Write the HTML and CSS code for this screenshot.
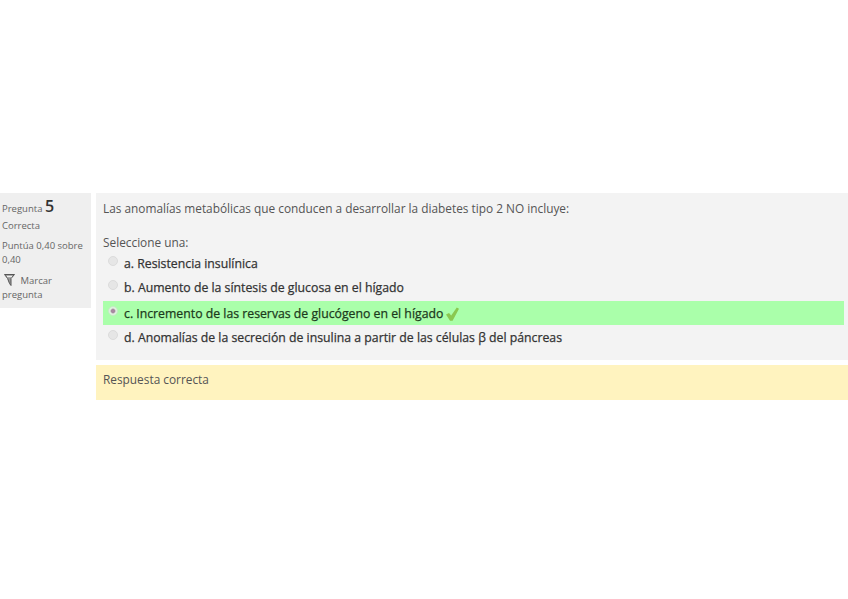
FILE: index.html
```html
<!DOCTYPE html>
<html lang="es">
<head>
<meta charset="utf-8">
<title>Pregunta 5</title>
<link rel="stylesheet" href="styles.css">
</head>
<body>
<main class="question">
  <aside class="info">
    <div class="qno">Pregunta <span class="num">5</span></div>
    <div class="state">Correcta</div>
    <div class="grade">Puntúa 0,40 sobre 0,40</div>
    <div class="flag">
      <svg class="flag-icon" width="11" height="12" viewBox="0 0 11 12"><path d="M0.5 0.5H10.5L7 4.5V11.5L5.5 9.5 3.6 4.5Z" fill="#9a9a9a" stroke="#555" stroke-width="1"/><path d="M3 2.5H8" stroke="#eee" stroke-width="1.4"/></svg>
      <span class="flag-first">Marcar</span> pregunta
    </div>
  </aside>
  <div class="content">
    <section class="formulation">
      <p class="qtext">Las anomalías metabólicas que conducen a desarrollar la diabetes tipo 2 NO incluye:</p>
      <p class="prompt">Seleccione una:</p>
      <div class="answers">
        <div class="option"><span class="radio"></span><span>a. Resistencia insulínica</span></div>
        <div class="option"><span class="radio"></span><span>b. Aumento de la síntesis de glucosa en el hígado</span></div>
        <div class="option correct"><span class="radio checked"></span><span>c. Incremento de las reservas de glucógeno en el hígado</span>
          <svg class="tick" width="13" height="14" viewBox="0 0 13 14"><path d="M0 7.6 3 6 5.2 8.4 10.8 0.6 13 1.8 6.6 13.8 4 13.8Z" fill="#8ac850"/></svg>
        </div>
        <div class="option"><span class="radio"></span><span>d. Anomalías de la secreción de insulina a partir de las células β del páncreas</span></div>
      </div>
    </section>
    <section class="feedback">Respuesta correcta</section>
  </div>
</main>
</body>
</html>
```
FILE: styles.css
```css
html, body {
  margin: 0;
  padding: 0;
  background: #fff;
}
body {
  font-family: "Open Sans", "Liberation Sans", sans-serif;
  color: #555;
  height: 599px;
  overflow: hidden;
  padding-top: 193px;
  box-sizing: border-box;
}
.question {
  display: flex;
  align-items: flex-start;
  gap: 5px;
}
.info {
  width: 91px;
  height: 115px;
  flex: none;
  box-sizing: border-box;
  background: #efefef;
  padding: 4px 0 0 2px;
  font-size: 9.5px;
  line-height: 14px;
  color: #666;
}
.qno {
  height: 18px;
  line-height: 18px;
}
.num {
  font-size: 16px;
  font-weight: 600;
  color: #333;
}
.state {
  margin-top: 4px;
}
.grade {
  margin-top: 6px;
}
.flag {
  margin-top: 7px;
}
.flag-icon {
  margin-left: 2px;
  vertical-align: -2px;
}
.flag-first {
  margin-left: 3px;
}
.content {
  flex: 1;
  min-width: 0;
  display: flex;
  flex-direction: column;
  gap: 5px;
}
.formulation {
  height: 167px;
  box-sizing: border-box;
  background: #f3f3f3;
  padding: 6px 4px 0 7px;
  font-size: 11.85px;
}
.qtext {
  margin: 0;
  line-height: 18px;
}
.prompt {
  margin: 16px 0 0;
  line-height: 18px;
}
.answers {
  display: flex;
  flex-direction: column;
}
.option {
  display: flex;
  align-items: center;
  height: 24px;
  padding-left: 5px;
  gap: 6px;
  color: #333;
  font-size: 12.27px;
  -webkit-text-stroke: 0.25px currentColor;
}
.option.correct {
  margin-top: 2px;
  background: #aaffaa;
  color: #1c3a1c;
}
.radio {
  width: 10px;
  height: 10px;
  flex: none;
  box-sizing: border-box;
  border-radius: 50%;
  border: 1px solid #dcdcdc;
  background: #e6e6e6;
  position: relative;
  top: -2px;
}
.radio.checked {
  background: radial-gradient(circle, #a78aa0 0 1.6px, #dff3df 3px);
  border-color: #c8eac8;
}
.tick {
  margin-left: -3px;
  position: relative;
  top: 1px;
}
.feedback {
  height: 35px;
  box-sizing: border-box;
  background: #fff3bf;
  padding: 5px 7px 0;
  font-size: 11.85px;
  line-height: 18px;
}
```
